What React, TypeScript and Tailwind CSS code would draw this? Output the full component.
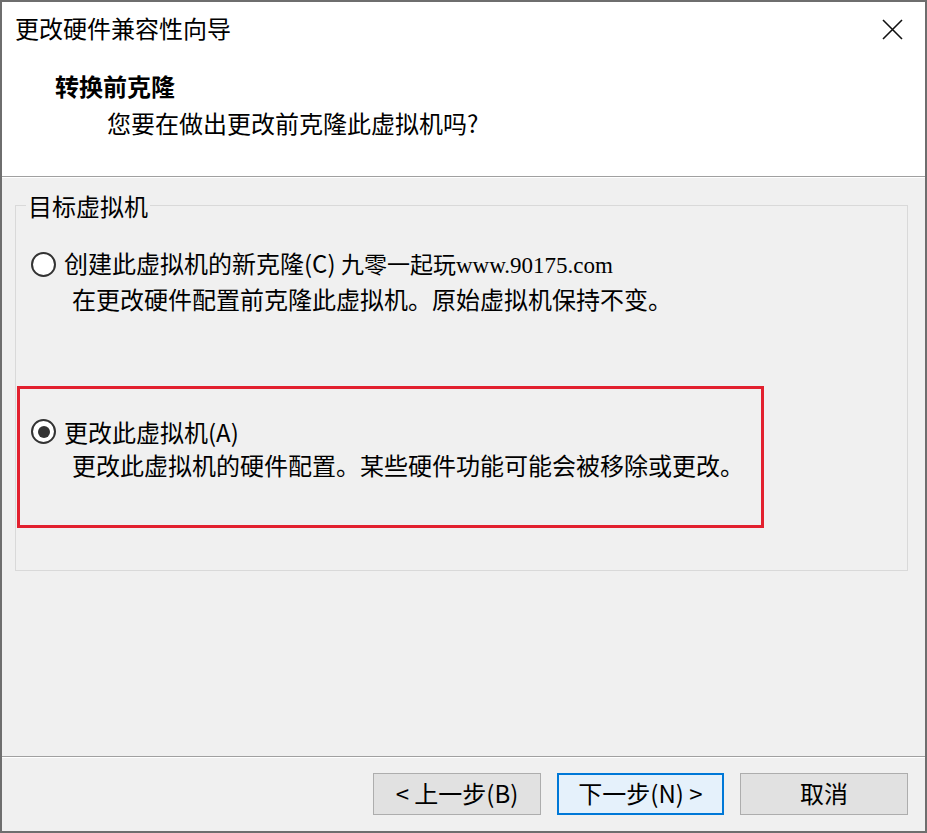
import React from 'react';

const Radio: React.FC<{ checked?: boolean }> = ({ checked }) => (
  <span className="flex h-[25px] w-[25px] shrink-0 items-center justify-center rounded-full border-2 border-[#333333] bg-white">
    {checked && <span className="h-[12px] w-[12px] rounded-full bg-[#333333]" />}
  </span>
);

const Button: React.FC<{ label: string; focused?: boolean }> = ({ label, focused }) => (
  <button
    className={
      focused
        ? 'h-[42px] w-[167px] border-2 border-[#0078d7] bg-[#e5f1fb] pb-[2px] text-[24px] leading-none text-black'
        : 'h-[42px] w-[168px] border border-[#adadad] bg-[#e1e1e1] pb-[2px] text-[24px] leading-none text-black'
    }
  >
    {label}
  </button>
);

const App: React.FC = () => {
  return (
    <div
      className="flex h-[833px] w-[927px] flex-col border-2 border-[#6e6e6e] bg-[#f0f0f0] text-black"
      style={{ fontFamily: '"Noto Sans CJK SC", "Noto Sans", sans-serif' }}
    >
      {/* Title + wizard header */}
      <div className="h-[174px] shrink-0 bg-white">
        <div className="flex h-[56px] items-center justify-between pb-[5px] pl-[13px] pr-[22px]">
          <span className="text-[24px] leading-[33px]">更改硬件兼容性向导</span>
          <svg width="21" height="21" viewBox="0 0 21 21" className="mt-[3px] text-[#111]">
            <path d="M1 1 L20 20 M20 1 L1 20" stroke="currentColor" strokeWidth="1.6" fill="none" />
          </svg>
        </div>
        <div className="mt-[11px] pl-[53px] text-[24px] font-bold leading-[33px]">转换前克隆</div>
        <div className="mt-[4px] pl-[105px] text-[24px] leading-[33px]">您要在做出更改前克隆此虚拟机吗?</div>
      </div>
      <div className="h-px shrink-0 bg-[#a0a0a0]" />
      <div className="h-px shrink-0 bg-white" />

      {/* Body */}
      <div className="flex-1 pl-[13px] pr-[17px] pt-[11px]">
        <fieldset className="border border-[#d9d9d9] pb-[42px]">
          <legend className="ml-[10px] px-[2px] text-[24px] leading-[33px]">目标虚拟机</legend>

          <div className="mt-[24px] pl-[15px]">
            <div className="flex items-center gap-[8px] text-[24px] leading-[33px]">
              <Radio />
              <span>
                创建此虚拟机的新克隆(C){' '}
                <span style={{ fontFamily: '"Liberation Serif", "Noto Sans CJK SC", serif' }} className="text-[23px]">
                  九零一起玩www.90175.com
                </span>
              </span>
            </div>
            <div className="pl-[41px] text-[24px] leading-[33px]">在更改硬件配置前克隆此虚拟机。原始虚拟机保持不变。</div>
          </div>

          <div className="ml-px mr-[143px] mt-[71px] border-[3px] border-[#e2202e] pb-[44px] pl-[11px] pt-[26px]">
            <div className="flex items-center gap-[8px] text-[24px] leading-[33px]">
              <Radio checked />
              <span>更改此虚拟机(A)</span>
            </div>
            <div className="pl-[41px] text-[24px] leading-[33px]">更改此虚拟机的硬件配置。某些硬件功能可能会被移除或更改。</div>
          </div>
        </fieldset>
      </div>

      {/* Footer */}
      <div className="h-px shrink-0 bg-[#a0a0a0]" />
      <div className="h-px shrink-0 bg-white" />
      <div className="flex h-[73px] shrink-0 items-start justify-end gap-[16px] pr-[17px] pt-[15px]">
        <Button label="< 上一步(B)" />
        <Button label="下一步(N) >" focused />
        <Button label="取消" />
      </div>
    </div>
  );
};

export default App;
